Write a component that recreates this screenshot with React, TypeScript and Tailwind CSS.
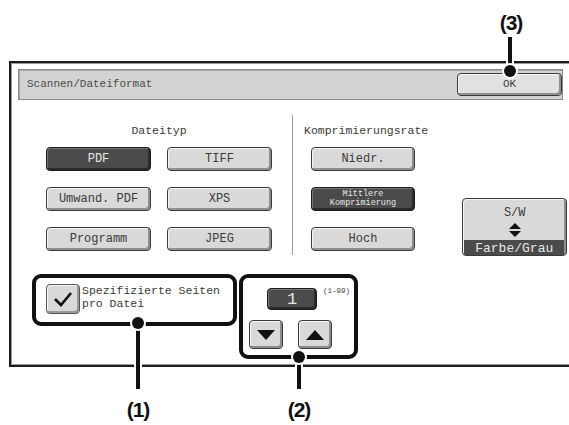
import React from "react";

type BtnProps = {
  label: React.ReactNode;
  active?: boolean;
  className?: string;
};

// panel button with the raised look of the copier touch screen
function PanelButton({ label, active, className = "" }: BtnProps) {
  return (
    <div
      className={
        "flex items-center justify-center rounded-[4px] border leading-none " +
        (active
          ? "border-[#1e1e1e] bg-[#4b4b4b] text-[#e8e8e8] shadow-[inset_-2px_-2px_0_#2a2a2a,inset_1px_1px_0_#777]"
          : "border-[#3a3a3a] bg-[#d9d9d9] text-[#3a3a3a] shadow-[inset_-2px_-2px_0_#8e8e8e,inset_1px_1px_0_#f6f6f6]") +
        " " +
        className
      }
    >
      {label}
    </div>
  );
}

// leader line with a dot on one end
function Callout({ x, top, bottom, dot }: { x: number; top: number; bottom: number; dot: number }) {
  return (
    <>
      <div
        className="absolute w-[4px] bg-[#111] ring-2 ring-white"
        style={{ left: x - 2, top, height: bottom - top }}
      />
      <div
        className="absolute h-[12px] w-[12px] rounded-full bg-[#111] ring-2 ring-white"
        style={{ left: x - 6, top: dot - 6 }}
      />
    </>
  );
}

function Triangle({ up }: { up?: boolean }) {
  return (
    <svg width="18" height="10" viewBox="0 0 18 10">
      <polygon points={up ? "9,0 18,10 0,10" : "0,0 18,0 9,10"} fill="#111" />
    </svg>
  );
}

const labelCls =
  "absolute w-[40px] text-center font-['Liberation_Sans',Arial,sans-serif] text-[21px] font-bold leading-none tracking-[-1px] text-[#111]";

export default function App() {
  return (
    <div className="relative h-[425px] w-[569px] overflow-hidden bg-white font-['Liberation_Mono',monospace]">
      <div className="pl-[9px] pt-[61px]">
        {/* outer frame */}
        <div className="h-[306px] w-[600px] border-2 border-[#1c1c1c] pl-[7px] pt-[6px] shadow-[inset_0_0_0_1px_#9a9a9a]">
          {/* title bar */}
          <div className="flex h-[31px] w-[545px] items-center justify-between border border-[#8a8a8a] bg-[#d3d3d3] pl-[8px] shadow-[inset_1px_1px_0_#a8a8a8]">
            <span className="text-[11px] text-[#4a4a4a]">Scannen/Dateiformat</span>
            <PanelButton label="OK" className="h-[23px] w-[105px] bg-[#e1e1e1] text-[11px]" />
          </div>

          <div className="pl-[28px]">
            <div className="flex">
              {/* Dateityp */}
              <div className="w-[226px]">
                <div className="mt-[22px] h-[16px] text-center text-[11.5px] text-[#3a3a3a]">Dateityp</div>
                <div className="mt-[9px] grid grid-cols-[105px_105px] gap-x-[16px] gap-y-[16px]">
                  <PanelButton label="PDF" active className="h-[24px] text-[12px]" />
                  <PanelButton label="TIFF" className="h-[24px] text-[12px]" />
                  <PanelButton label="Umwand. PDF" className="h-[24px] text-[12px]" />
                  <PanelButton label="XPS" className="h-[24px] text-[12px]" />
                  <PanelButton label="Programm" className="h-[24px] text-[12px]" />
                  <PanelButton label="JPEG" className="h-[24px] text-[12px]" />
                </div>
              </div>

              <div className="ml-[20px] mt-[15px] h-[140px] w-px bg-[#a0a0a0]" />

              {/* Komprimierungsrate */}
              <div className="ml-[11px]">
                <div className="mt-[22px] h-[16px] text-[11.5px] text-[#3a3a3a]">Komprimierungsrate</div>
                <div className="ml-[7px] mt-[9px] flex w-[104px] flex-col gap-[16px]">
                  <PanelButton label="Niedr." className="h-[24px] text-[12px]" />
                  <PanelButton
                    label={
                      <span className="text-center text-[8.5px] leading-[9px]">
                        Mittlere
                        <br />
                        Komprimierung
                      </span>
                    }
                    active
                    className="h-[24px]"
                  />
                  <PanelButton label="Hoch" className="h-[24px] text-[12px]" />
                </div>
              </div>

              {/* S/W - Farbe/Grau */}
              <div className="ml-[34px] mt-[98px] flex h-[58px] w-[105px] flex-col overflow-hidden rounded-[4px] border border-[#3a3a3a] bg-[#d9d9d9] shadow-[inset_-2px_-2px_0_#8e8e8e,inset_1px_1px_0_#f6f6f6]">
                <div className="mt-[8px] text-center text-[12px] leading-none text-[#3a3a3a]">S/W</div>
                <div className="mt-[4px] flex justify-center">
                  <svg width="12" height="14" viewBox="0 0 12 14">
                    <polygon points="6,0 12,6 0,6" fill="#111" />
                    <polygon points="0,8 12,8 6,14" fill="#111" />
                  </svg>
                </div>
                <div className="mb-[2px] ml-[1px] mr-[2px] mt-[3px] flex h-[17px] items-center justify-center bg-[#4b4b4b] text-[13px] text-[#e8e8e8]">
                  Farbe/Grau
                </div>
              </div>
            </div>

            {/* bottom group */}
            <div className="-ml-[14px] mt-[18px] flex items-start gap-[2px]">
              <div className="flex h-[52px] w-[205px] items-start gap-[2px] rounded-[9px] border-[4px] border-[#111] pl-[10px] pt-[6px]">
                <div className="flex h-[30px] w-[34px] shrink-0 items-center justify-center rounded-[4px] border border-[#555] bg-[#d9d9d9] shadow-[inset_-2px_-2px_0_#9a9a9a,inset_1px_1px_0_#f6f6f6]">
                  <svg width="20" height="16" viewBox="0 0 20 16">
                    <path d="M2 8 L8 14 L18 2" fill="none" stroke="#111" strokeWidth="2.6" />
                  </svg>
                </div>
                <div className="text-[11.5px] leading-[13px] text-[#3a3a3a]">
                  Spezifizierte Seiten
                  <br />
                  pro Datei
                </div>
              </div>

              <div className="relative h-[85px] w-[119px] rounded-[9px] border-[4px] border-[#111] pl-[6px] pt-[10px]">
                <PanelButton
                  label="1"
                  active
                  className="ml-[18px] h-[22px] w-[50px] text-[17px] font-light"
                />
                <span className="absolute left-[80px] top-[8px] text-[7.5px] text-[#444]">(1-99)</span>
                <div className="mt-[10px] flex gap-[15px]">
                  <PanelButton label={<Triangle />} className="h-[29px] w-[34px]" />
                  <PanelButton label={<Triangle up />} className="h-[29px] w-[34px]" />
                </div>
              </div>
            </div>
          </div>
        </div>
      </div>

      {/* callouts */}
      <Callout x={510} top={37} bottom={71} dot={71} />
      <Callout x={138} top={323} bottom={389} dot={323} />
      <Callout x={299} top={357} bottom={389} dot={357} />

      <div className={labelCls + " left-[491px] top-[12px]"}>(3)</div>
      <div className={labelCls + " left-[118px] top-[399px]"}>(1)</div>
      <div className={labelCls + " left-[279px] top-[399px]"}>(2)</div>
    </div>
  );
}
